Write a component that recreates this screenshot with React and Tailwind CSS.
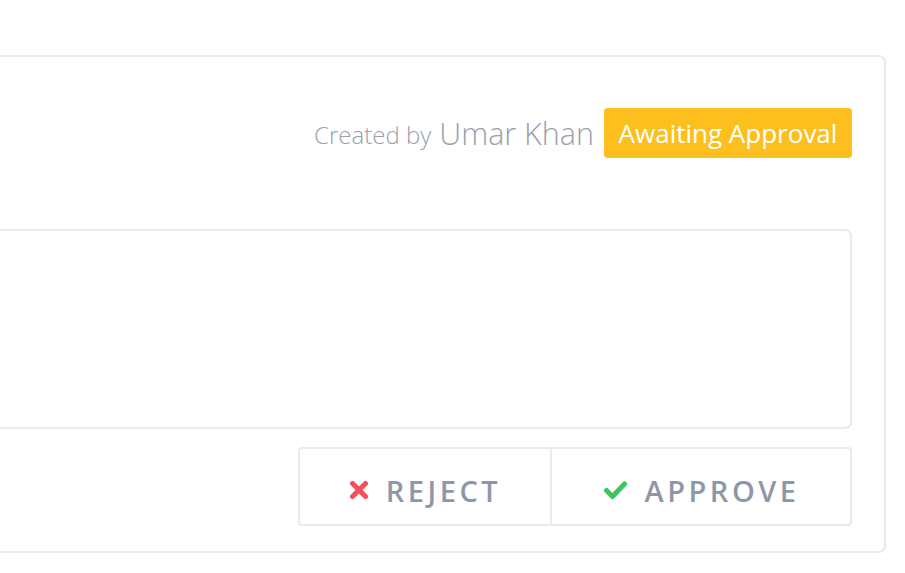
import React from "react";

export default function App() {
  return (
    <div className="w-[905px] h-[573px] bg-white overflow-hidden" style={{ fontFamily: '"Open Sans", sans-serif' }}>
      <div className="mt-[55px] w-[886px] h-[498px] border-2 border-l-0 border-[#e9e9f0] rounded-r-[7px] pr-[32px] flex flex-col">
        <div className="mt-[51px] flex items-center justify-end">
          <span className="text-[24px] font-light text-[#9ba0ab] leading-none pt-[3px]">Created by</span>
          <span className="ml-[8px] text-[30.5px] font-light text-[#9ba0ab] leading-none">Umar Khan</span>
          <span className="ml-[10px] h-[50px] w-[248px] bg-[#fcbf1e] rounded-[4px] text-white text-[26px] flex items-center justify-center">Awaiting Approval</span>
        </div>
        <div className="mt-[71px] h-[200px] border-2 border-l-0 border-[#e9e9f0] rounded-r-[7px]"></div>
        <div className="mt-[18px] flex justify-end">
          <div className="flex h-[79px] border-2 border-[#e9e9f0] rounded-[4px]">
            <button className="w-[252px] flex items-center justify-center gap-[17px] text-[#8e97a8] text-[29px] font-semibold tracking-[3.5px] border-r-2 border-[#e9e9f0] pt-[8px]">
              <svg width="20" height="20" viewBox="0 0 20 20" className="-mt-[2px]"><path d="M3.5 3.5 L16.5 16.5 M16.5 3.5 L3.5 16.5" stroke="#f3505c" strokeWidth="5" strokeLinecap="round" /></svg>
              <span>REJECT</span>
            </button>
            <button className="w-[298px] flex items-center justify-center gap-[17px] text-[#8e97a8] text-[29px] font-semibold tracking-[3.5px] pt-[8px]">
              <svg width="25" height="20" viewBox="0 0 25 20" className="-mt-[2px]"><path d="M3.5 10.5 L9.5 16.5 L21.5 4" stroke="#3ec55a" strokeWidth="5" fill="none" strokeLinecap="round" strokeLinejoin="round" /></svg>
              <span>APPROVE</span>
            </button>
          </div>
        </div>
      </div>
    </div>
  );
}
